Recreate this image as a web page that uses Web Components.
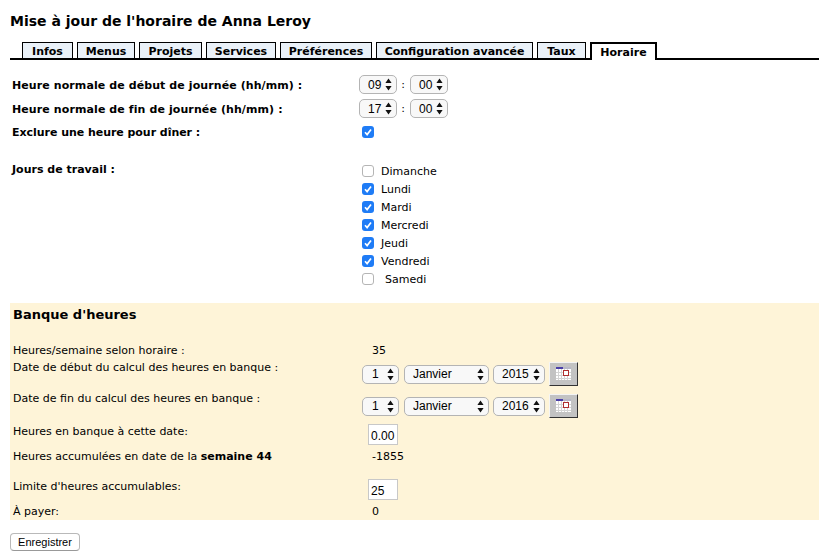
<!DOCTYPE html>
<html lang="fr">
<head>
<meta charset="utf-8">
<title>Horaire</title>
<style>
  html, body { margin: 0; padding: 0; background: #fff; }
  body { font: 11px "DejaVu Sans", Verdana, sans-serif; color: #000; }
</style>
</head>
<body>
<page-shell>
  <page-tabs>
    <tab-item w="51">Infos</tab-item>
    <tab-item w="58">Menus</tab-item>
    <tab-item w="63">Projets</tab-item>
    <tab-item w="70">Services</tab-item>
    <tab-item w="92">Préférences</tab-item>
    <tab-item w="157">Configuration avancée</tab-item>
    <tab-item w="49">Taux</tab-item>
    <tab-item w="67" active>Horaire</tab-item>
  </page-tabs>

  <form-row h="24" ls="0.09" label="Heure normale de début de journée (hh/mm) :" strong>
    <time-pair hour="09"></time-pair>
  </form-row>
  <form-row h="24" ls="0.1" label="Heure normale de fin de journée (hh/mm) :" strong>
    <time-pair hour="17"></time-pair>
  </form-row>
  <form-row h="22" ls="-0.04" label="Exclure une heure pour dîner :" strong>
    <check-box checked></check-box>
  </form-row>

  <work-days label="Jours de travail :">
    <check-box label="Dimanche"></check-box>
    <check-box label="Lundi" checked></check-box>
    <check-box label="Mardi" checked></check-box>
    <check-box label="Mercredi" checked></check-box>
    <check-box label="Jeudi" checked></check-box>
    <check-box label="Vendredi" checked></check-box>
    <check-box label="Samedi" extra="4"></check-box>
  </work-days>

  <bank-panel title="Banque d'heures">
    <form-row h="17" align="top" label="Heures/semaine selon horaire :" indent="13"><plain-value>35</plain-value></form-row>
    <form-row h="31" align="top" label="Date de début du calcul des heures en banque :" indent="13">
      <date-picker year="2015" mt="2"></date-picker>
    </form-row>
    <form-row h="33" align="top" label="Date de fin du calcul des heures en banque :" indent="13">
      <date-picker year="2016" mt="3"></date-picker>
    </form-row>
    <form-row h="25" align="top" label="Heures en banque à cette date:" indent="13">
      <num-field value="0.00"></num-field>
    </form-row>
    <form-row h="30" align="top" indent="13" label="Heures accumulées en date de la <b>semaine 44</b>"><plain-value>-1855</plain-value></form-row>
    <form-row h="25" align="top" label="Limite d'heures accumulables:" indent="13">
      <num-field value="25"></num-field>
    </form-row>
    <form-row h="16" align="top" label="À payer:" indent="13"><plain-value>0</plain-value></form-row>
  </bank-panel>

  <save-button>Enregistrer</save-button>
</page-shell>

<script>
(function() {
  const ARROWS = `<svg width="7" height="13" viewBox="0 0 7 13"><path d="M3.5 0.5 L6.6 5 L0.4 5 Z M3.5 12.5 L6.6 8 L0.4 8 Z" fill="#111"/></svg>`;

  // page frame with title
  class PageShell extends HTMLElement {
    constructor() {
      super();
      this.attachShadow({ mode: 'open' });
      this.shadowRoot.innerHTML = `
        <style>
          :host { display: block; width: 819px; height: 558px; overflow: hidden; box-sizing: border-box; padding-top: 12px; }
          h1 { margin: 0 0 0 10px; font: bold 14px/19px "DejaVu Sans", Verdana, sans-serif; height: 30px; }
        </style>
        <h1>Mise à jour de l'horaire de Anna Leroy</h1>
        <slot></slot>
      `;
    }
  }
  customElements.define('page-shell', PageShell);

  class PageTabs extends HTMLElement {
    constructor() {
      super();
      this.attachShadow({ mode: 'open' });
      this.shadowRoot.innerHTML = `
        <style>
          :host { display: flex; gap: 4px; margin-left: 10px; padding-left: 12px; height: 16px; border-bottom: 2px solid #000; margin-bottom: 13px; }
        </style>
        <slot></slot>
      `;
    }
  }
  customElements.define('page-tabs', PageTabs);

  class TabItem extends HTMLElement {
    constructor() {
      super();
      this.attachShadow({ mode: 'open' });
    }
    connectedCallback() {
      this.shadowRoot.innerHTML = `
        <style>
          :host { display: block; box-sizing: border-box; width: ${this.getAttribute('w')}px; height: 16px; background: #eaf1f8; border: 1px solid #000; border-bottom: 0;
            text-align: center; font: bold 11px/17px "DejaVu Sans", Verdana, sans-serif; white-space: nowrap; }
          :host([active]) { height: 18px; background: #fff; border: 2px solid #000; border-bottom: 0; line-height: 17px; }
        </style>
        <slot></slot>
      `;
    }
  }
  customElements.define('tab-item', TabItem);

  // label column + value column
  class FormRow extends HTMLElement {
    constructor() {
      super();
      this.attachShadow({ mode: 'open' });
    }
    connectedCallback() {
      const indent = this.getAttribute('indent') || 12;
      const strong = this.hasAttribute('strong');
      const top = this.getAttribute('align') === 'top';
      this.shadowRoot.innerHTML = `
        <style>
          :host { display: grid; grid-template-columns: 347px 1fr; height: ${this.getAttribute('h')}px; align-items: ${top ? 'start' : 'center'}; }
          .label { padding: ${top ? 1 : 2}px 0 0 ${indent}px; font-weight: ${strong ? 'bold' : 'normal'}; line-height: 14px; white-space: nowrap;
            letter-spacing: ${this.getAttribute('ls') || 0}px; }
        </style>
        <div class="label">${this.getAttribute('label')}</div>
        <div class="value"><slot></slot></div>
      `;
    }
  }
  customElements.define('form-row', FormRow);

  class PlainValue extends HTMLElement {
    constructor() {
      super();
      this.attachShadow({ mode: 'open' });
      this.shadowRoot.innerHTML = `
        <style>:host { display: block; padding: 1px 0 0 25px; line-height: 14px; }</style>
        <slot></slot>
      `;
    }
  }
  customElements.define('plain-value', PlainValue);

  // select drawn the way Safari does on a Mac
  class MacSelect extends HTMLElement {
    constructor() {
      super();
      this.attachShadow({ mode: 'open' });
    }
    connectedCallback() {
      const w = this.getAttribute('w');
      const pad = this.getAttribute('pad') || 8;
      const val = this.getAttribute('value');
      this.shadowRoot.innerHTML = `
        <style>
          :host { display: inline-block; position: relative; width: ${w}px; height: 19px; flex: none; }
          select { appearance: none; -webkit-appearance: none; box-sizing: border-box; width: 100%; height: 100%; margin: 0;
            padding: 0 0 0 ${pad}px; border: 1px solid #b4b4b4; border-radius: 5px; background: #f8f8f8; color: #000; outline: 0;
            font: 12px "Liberation Sans", Arial, sans-serif; }
          svg { position: absolute; right: 5px; top: 3px; }
        </style>
        <select><option>${val}</option></select>
        ${ARROWS}
      `;
    }
  }
  customElements.define('mac-select', MacSelect);

  class TimePair extends HTMLElement {
    constructor() {
      super();
      this.attachShadow({ mode: 'open' });
    }
    connectedCallback() {
      this.shadowRoot.innerHTML = `
        <style>
          :host { display: flex; align-items: center; margin: 0 0 1px 12px; width: 89px; }
          .sep { width: 12px; padding-right: 1px; text-align: center; font-weight: normal; }
        </style>
        <mac-select w="38" value="${this.getAttribute('hour')}"></mac-select>
        <span class="sep">:</span>
        <mac-select w="38" value="00"></mac-select>
      `;
    }
  }
  customElements.define('time-pair', TimePair);

  class CheckBox extends HTMLElement {
    constructor() {
      super();
      this.attachShadow({ mode: 'open' });
    }
    connectedCallback() {
      const on = this.hasAttribute('checked');
      const label = this.getAttribute('label');
      const extra = +(this.getAttribute('extra') || 0);
      this.shadowRoot.innerHTML = `
        <style>
          :host { display: flex; align-items: center; height: 18px; padding-left: 15px; }
          .box { box-sizing: border-box; width: 12px; height: 12px; border-radius: 3px; flex: none; display: block; }
          .on { background: #1f7cf6; }
          .off { background: #fff; border: 1px solid #b5b5b5; }
          span { margin-left: ${7 + extra}px; }
        </style>
        ${on
          ? `<svg class="box on" viewBox="0 0 12 12"><path d="M3 6.3 L5.1 8.6 L9 3.6" fill="none" stroke="#fff" stroke-width="1.7"/></svg>`
          : `<i class="box off"></i>`}
        ${label ? `<span>${label}</span>` : ''}
      `;
    }
  }
  customElements.define('check-box', CheckBox);

  class WorkDays extends HTMLElement {
    constructor() {
      super();
      this.attachShadow({ mode: 'open' });
    }
    connectedCallback() {
      this.shadowRoot.innerHTML = `
        <style>
          :host { display: grid; grid-template-columns: 347px 1fr; margin-top: 19px; margin-bottom: 15px; }
          .label { padding: 1px 0 0 12px; font-weight: bold; line-height: 14px; }
        </style>
        <div class="label">${this.getAttribute('label')}</div>
        <div><slot></slot></div>
      `;
    }
  }
  customElements.define('work-days', WorkDays);

  class BankPanel extends HTMLElement {
    constructor() {
      super();
      this.attachShadow({ mode: 'open' });
    }
    connectedCallback() {
      this.shadowRoot.innerHTML = `
        <style>
          :host { display: block; margin-left: 10px; height: 217px; background: #fef4d8; box-sizing: border-box; margin-bottom: 13px; }
          h2 { margin: 0 0 0 3px; padding-top: 3px; height: 40px; box-sizing: border-box; font: bold 13px/17px "DejaVu Sans", Verdana, sans-serif; }
          .rows { margin-left: -10px; }
        </style>
        <h2>${this.getAttribute('title')}</h2>
        <div class="rows"><slot></slot></div>
      `;
    }
  }
  customElements.define('bank-panel', BankPanel);

  class CalendarButton extends HTMLElement {
    constructor() {
      super();
      this.attachShadow({ mode: 'open' });
      this.shadowRoot.innerHTML = `
        <style>
          :host { display: block; box-sizing: border-box; width: 29px; height: 24px; flex: none; background: #c3c3c3;
            border: 1px solid; border-color: #f4f4f4 #333 #333 #f4f4f4; }
          svg { display: block; margin: 4px 0 0 6px; }
        </style>
        <svg width="15" height="13" viewBox="0 0 15 13">
          <rect width="15" height="13" fill="#fff"/>
          <rect width="7" height="2" fill="#4a3fa8"/>
          <rect x="7" width="8" height="2" fill="#b8b8c8"/>
          <path d="M0 5.5H15M0 8.5H15M0 11.5H15M2.5 2V13M5.5 2V13M8.5 2V13M11.5 2V13" stroke="#d4d4d4" stroke-width="1"/>
          <rect x="7.5" y="3.5" width="5" height="5" fill="#fff" stroke="#b03030"/>
        </svg>
      `;
    }
  }
  customElements.define('calendar-button', CalendarButton);

  class DatePicker extends HTMLElement {
    constructor() {
      super();
      this.attachShadow({ mode: 'open' });
    }
    connectedCallback() {
      this.shadowRoot.innerHTML = `
        <style>
          :host { display: flex; align-items: center; height: 24px; gap: 4px; margin: ${this.getAttribute('mt')}px 0 0 15px; }
          .gap { margin-left: 1px; }
        </style>
        <mac-select w="37" value="1" pad="9"></mac-select>
        <mac-select class="gap" w="85" value="Janvier" pad="8"></mac-select>
        <mac-select w="52" value="${this.getAttribute('year')}" pad="8"></mac-select>
        <calendar-button></calendar-button>
      `;
    }
  }
  customElements.define('date-picker', DatePicker);

  class NumField extends HTMLElement {
    constructor() {
      super();
      this.attachShadow({ mode: 'open' });
    }
    connectedCallback() {
      this.shadowRoot.innerHTML = `
        <style>
          :host { display: block; margin-left: 21px; width: 30px; height: 21px; }
          input { box-sizing: border-box; width: 30px; height: 21px; margin: 0; padding: 2px 0 0 2px; border: 1px solid #c8c8c8; background: #fff; outline: 0;
            font: 12px "Liberation Sans", Arial, sans-serif; color: #000; }
        </style>
        <input type="text" value="${this.getAttribute('value')}">
      `;
    }
  }
  customElements.define('num-field', NumField);

  class SaveButton extends HTMLElement {
    constructor() {
      super();
      this.attachShadow({ mode: 'open' });
      this.shadowRoot.innerHTML = `
        <style>
          :host { display: block; margin-left: 10px; width: 70px; }
          button { box-sizing: border-box; width: 70px; height: 18px; padding: 0; background: #fff; border: 1px solid #b9b9b9; border-bottom-color: #999; border-radius: 4px;
            font: 11px "Liberation Sans", Arial, sans-serif; color: #000; }
        </style>
        <button type="button"><slot></slot></button>
      `;
    }
  }
  customElements.define('save-button', SaveButton);
})();
</script>
</body>
</html>
